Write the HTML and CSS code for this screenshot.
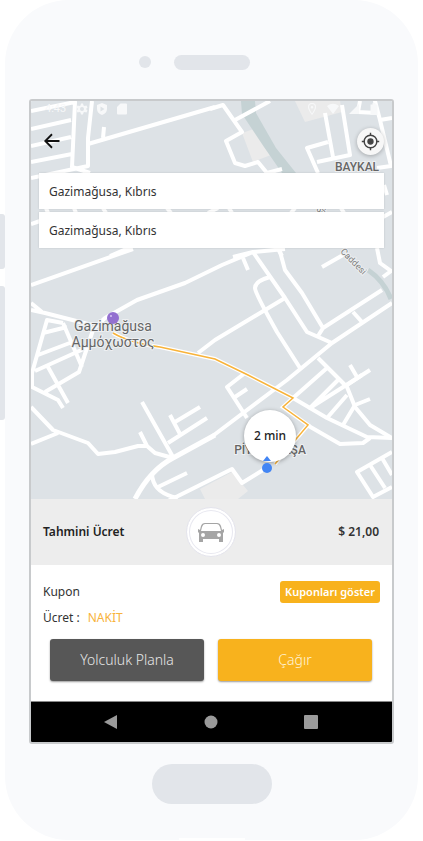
FILE: index.html
```html
<!DOCTYPE html>
<html lang="tr">
<head>
<meta charset="utf-8">
<meta name="viewport" content="width=device-width, initial-scale=1">
<title>Taksi</title>
<link rel="stylesheet" href="styles.css">
</head>
<body>
<div class="phone">
  <div class="side side-short"></div>
  <div class="side side-long"></div>
  <div class="speaker"><span class="lens"></span><span class="slot"></span></div>
  <main class="screen">
    <section class="map-area">
      <svg class="map" viewBox="31 101 361 398" role="img" aria-label="Gazimağusa">
        <rect x="31" y="101" width="361" height="398" fill="#dde2e6"/>
        <g fill="#ebebeb">
          <path d="M295 101l10 21 37-10-2-11zM242 133l15-5 14 27-18 7zM200 489l32-17 16 19-10 8h-33z"/>
        </g>
        <path d="M241 101h14l1 12 20 35 20 25h-14l-18-26-22-33z" fill="#c5d2d4"/>
        <circle cx="250" cy="111" r="1" fill="#fff"/>
        <path d="M368 270Q384 281 391 299" fill="none" stroke="#c5d2d4" stroke-width="5"/>
        <g fill="none" stroke="#fff" stroke-width="4" stroke-linejoin="round">
          <path d="M31 111L75 102L72 167L90 173M31 129L71 120M31 146L71 137M31 162L72 154M31 178L88 166L88 138L92 101M88 144L215 107M104 127L103 138"/>
          <path d="M210 109L223 105L242 132L226 141L235 163L245 166L258 162L267 173L282 169M235 120L270 101M325 113L333 157M342 105L350 155L317 162M328 142L307 148L318 173M360 101L358 112L377 113L375 101L380 120L392 118M380 120L391 166L377 168M384 185L387 195M383 217L392 212"/>
          <path d="M46 208L48 213M74 208L76 213M103 208L106 213M167 208L171 213M208 213L218 208M229 208L232 213M291 213L295 208M341 208L344 213M31 224L40 221"/>
          <path d="M110 256L133 246M278 249L282 256"/>
          <path d="M31 285L133 249M31 303L42 312M31 310L45 313L92 325M92 330L105 318L137 300L185 283L222 265L253 252L285 249M253 252L233 257M63 323L47 320L32 373L32 387L58 400L63 408M43 333L67 327M38 355L75 341M35 371L88 347M63 323L82 367M93 330L79 372L45 392M48 367L68 403M198 353L215 340L285 298"/>
          <path d="M253 252L285 298L307 332L332 343M243 258L248 270M270 277Q255 281 255 288Q255 293 277 332L300 368M279 248L285 270L302 293L323 328L318 336M323 328L382 290M383 277L391 271L380 263L377 248M322 267L343 255M392 303L332 343L287 380L210 438M353 312L362 322M318 358L347 387L355 407L370 425L392 438M327 368L293 398M350 365L357 377M370 370L310 408L338 380"/>
          <path d="M31 407L53 430L88 443L98 454L115 452L138 446H147L155 453L173 458M31 444L58 433M140 432L147 446M142 402L173 457M168 443L207 418M170 415L180 434M175 422L200 407M158 487L187 473M152 473Q152 493 178 498M168 501L232 469L242 483L263 470"/>
          <path d="M245 373L227 387L247 418M235 397L247 389M293 398L327 418L367 437L392 438M307 425L340 444L363 443L370 438M327 418L347 395M343 425L355 405L370 399M347 385L362 375M392 452L357 472L373 497L392 487M370 465L385 488M382 458L392 475"/>
        </g>
        <path d="M215 435L173 458Q150 470 135 499" fill="none" stroke="#fff" stroke-width="5"/>
        <path d="M113 333Q130 343 160 347L215 359L248 375L293 398L283 407L308 425L275 464" fill="none" stroke="#fff" stroke-width="4"/>
        <path d="M113 333Q130 343 160 347L215 359L248 375L293 398L283 407L308 425L275 464" fill="none" stroke="#f8b33a" stroke-width="1.5"/>
        <g class="place">
          <text class="town" x="113" y="331">Gazimağusa</text>
          <text class="town" x="113" y="347">Αμμόχωστος</text>
          <text class="quarter" x="357" y="171">BAYKAL</text>
          <text class="quarter" x="270" y="454">PİYALE PAŞA</text>
          <text class="street" transform="translate(342 250) rotate(45)" x="0" y="3">Caddesi</text>
          <text class="street" transform="translate(316 211) rotate(15)" x="0" y="0">us</text>
        </g>
        <circle cx="113" cy="318" r="6" fill="#9370d0"/>
        <circle cx="111" cy="316" r="1" fill="#d8c8f4"/>
        <circle class="bubble" cx="270" cy="436" r="26" fill="#fff"/>
        <text class="eta" x="270" y="440">2 min</text>
        <path d="M267 456l4 5h-8z" fill="#4285f4"/>
        <circle cx="267" cy="468" r="5" fill="#4285f4"/>
      </svg>
      <div class="overlay">
        <div class="status">
          <span class="clock">4:43</span>
          <svg viewBox="0 0 24 24"><path fill-rule="evenodd" d="M10 1h4l1 4 2 1 4-1 2 4-3 3 3 3-2 4-4-1-2 1-1 4h-4l-1-4-2-1-4 1-2-4 3-3-3-3 2-4 4 1 2-1zM12 8a4 4 0 1 0 0 8 4 4 0 0 0 0-8z"/></svg>
          <svg viewBox="0 0 24 24"><path fill-rule="evenodd" d="M12 0l10 4v8c0 6-4 10-10 12C6 22 2 18 2 12V4zM9 7v10l8-5z"/></svg>
          <svg viewBox="0 0 24 24"><path d="M9 1h11q2 0 2 2v18q0 2-2 2H4q-2 0-2-2V8z"/></svg>
          <svg class="push" viewBox="0 0 24 24"><path fill-rule="evenodd" d="M12 0a8 8 0 0 1 8 8c0 6-8 16-8 16S4 14 4 8a8 8 0 0 1 8-8zm0 2a6 6 0 0 0-6 6c0 3 3 9 6 13 3-4 6-10 6-13a6 6 0 0 0-6-6zm0 4a2 2 0 1 1 0 5 2 2 0 0 1 0-5z"/></svg>
          <svg class="wifi" viewBox="0 0 24 24"><path d="M0 6Q12-3 24 6L12 22z"/></svg>
          <svg viewBox="0 0 24 24"><path d="M22 2v20H2z"/></svg>
          <svg viewBox="0 0 24 24"><path d="M9 0h6v3h4v21H5V3h4z"/></svg>
        </div>
        <div class="toolbar">
          <button class="back" aria-label="Geri"><svg viewBox="0 0 24 24"><path d="M22 12H4M12 3l-9 9 9 9" fill="none" stroke="#111" stroke-width="2.400"/></svg></button>
          <button class="locate" aria-label="Konumum"><svg viewBox="0 0 24 24"><circle cx="12" cy="12" r="4" fill="#444"/><circle cx="12" cy="12" r="8" fill="none" stroke="#444" stroke-width="1.800"/><path d="M12 1v4M12 19v4M1 12h4M19 12h4" stroke="#444" stroke-width="1.800"/></svg></button>
        </div>
        <div class="fields">
          <input type="text" aria-label="Nereden" value="Gazimağusa, Kıbrıs">
          <input type="text" aria-label="Nereye" value="Gazimağusa, Kıbrıs">
        </div>
      </div>
    </section>
    <section class="fare">
      <span class="fare-title">Tahmini Ücret</span>
      <span class="car"><svg viewBox="0 0 28 24"><path fill-rule="evenodd" fill="#a5a5a5" d="M8 3h12q3 0 4 3l1 4 2-1v3l-1 1v9h-4v-3H6v3H2v-9l-1-1V9l2 1 1-4q1-3 4-3zm0 1q-2 0-3 3l-1 4h20l-1-4q-1-3-3-3zM6 13a2 2 0 1 0 0 4 2 2 0 0 0 0-4zm16 0a2 2 0 1 0 0 4 2 2 0 0 0 0-4z"/></svg></span>
      <span class="price">$ 21,00</span>
    </section>
    <section class="panel">
      <div class="row"><span>Kupon</span><button class="coupons">Kuponları göster</button></div>
      <div class="row pay"><span>Ücret :</span><span class="cash">NAKİT</span></div>
      <div class="actions"><button class="plan">Yolculuk Planla</button><button class="call">Çağır</button></div>
    </section>
    <nav class="keys">
      <button aria-label="Geri tuşu"><svg viewBox="0 0 16 16"><path d="M14 1v14L1 8z"/></svg></button>
      <button aria-label="Ana ekran"><svg viewBox="0 0 16 16"><circle cx="8" cy="8" r="6.500"/></svg></button>
      <button aria-label="Son uygulamalar"><svg viewBox="0 0 16 16"><rect x="1" y="1" width="14" height="14" rx="1"/></svg></button>
    </nav>
  </main>
  <div class="home"></div>
</div>
</body>
</html>
```
FILE: styles.css
```css
* { box-sizing: border-box; }
body {
  margin: 0;
  background: #fff;
  color: #333;
  font-family: "Noto Sans", sans-serif;
  font-size: 12px;
  line-height: 16px;
}
button, input { font: inherit; border: 0; padding: 0; margin: 0; }
svg { display: block; }
.phone {
  position: relative;
  margin: 0 5px 2px;
  padding: 0 24px 36px;
  background: #f9fafc;
  border-radius: 64px;
}
.phone::after {
  content: "";
  position: absolute;
  bottom: 0;
  left: 50%;
  width: 66px;
  height: 2px;
  margin-left: -33px;
  background: #fff;
}
.side {
  position: absolute;
  left: -5px;
  width: 5px;
  background: #e2e5ea;
  border-radius: 0 3px 3px 0;
}
.side-short { top: 214px; height: 55px; }
.side-long { top: 286px; height: 134px; }
.speaker {
  display: flex;
  align-items: center;
  gap: 23px;
  height: 99px;
  padding: 25px 0 0 110px;
}
.lens { width: 12px; height: 12px; border-radius: 50%; background: #e2e5ea; }
.slot { width: 76px; height: 15px; border-radius: 8px; background: #e2e5ea; }
.screen {
  border: 2px solid #c8cacc;
  border-radius: 3px;
  background: #fff;
  overflow: hidden;
}
.map-area { display: grid; }
.map, .overlay { grid-area: 1 / 1; width: 100%; }
.place { fill: #666; stroke: #eef0f2; stroke-width: 2px; paint-order: stroke; font-family: Roboto, sans-serif; }
.town { font-size: 14px; text-anchor: middle; }
.quarter { font-size: 12px; font-weight: 500; text-anchor: middle; }
.street { font-size: 9px; fill: #808080; }
.bubble { filter: drop-shadow(0 1px 2px #0005); }
.eta { font-size: 12px; font-weight: 500; fill: #222; text-anchor: middle; }
.status {
  display: flex;
  align-items: center;
  gap: 8px;
  height: 16px;
  padding: 0 12px 0 14px;
  color: #f7f8f9;
  font: 11px/16px Roboto, sans-serif;
}
.status svg { width: 12px; height: 12px; fill: #f7f8f9; }
.clock { margin-right: 2px; }
.status .push { margin-left: auto; }
.status .wifi { width: 14px; }
.toolbar {
  display: flex;
  align-items: center;
  justify-content: space-between;
  height: 48px;
  padding: 0 8px 0 12px;
}
.back { background: none; }
.back svg { width: 18px; height: 18px; }
.locate {
  display: grid;
  place-items: center;
  width: 27px;
  height: 27px;
  border-radius: 50%;
  background: #f7f7f7;
  box-shadow: 0 1px 4px #0004;
}
.locate svg { width: 19px; height: 19px; }
.fields { display: grid; gap: 3px; padding: 8px 8px 0; }
.fields input {
  width: 100%;
  height: 36px;
  padding: 0 10px;
  background: #fff;
  color: #333;
  box-shadow: 0 0 2px #0002;
}
.fare {
  display: grid;
  grid-template-columns: 1fr auto 1fr;
  align-items: center;
  padding: 8px 13px 8px 12px;
  background: #ededed;
}
.fare-title { font-weight: 600; color: #222; }
.price { text-align: right; font-weight: 600; }
.car {
  display: grid;
  place-items: center;
  width: 50px;
  height: 50px;
  border-radius: 50%;
  background: #fff;
  border: 1px solid #e4e4ec;
  box-shadow: inset 0 0 0 2px #fff, inset 0 0 0 3px #e8e8f0;
}
.car svg { width: 28px; height: 24px; }
.panel { padding: 16px 12px 20px; }
.row { display: flex; align-items: center; justify-content: space-between; height: 22px; }
.pay { justify-content: flex-start; gap: 8px; margin-top: 4px; }
.cash { color: #f8b33a; }
.coupons {
  height: 22px;
  padding: 0 5px;
  border-radius: 3px;
  background: #f8b21d;
  color: #fff;
  font-size: 11px;
  font-weight: 600;
}
.actions { display: flex; gap: 14px; padding: 10px 8px 0 7px; }
.actions button {
  flex: 1;
  height: 42px;
  border-radius: 3px;
  color: #e6e6e6;
  font-size: 14px;
  font-weight: 300;
  box-shadow: 0 1px 2px #0006;
}
.actions .plan { background: #575757; }
.actions .call { background: #f8b21d; color: #fff3d6; }
.keys {
  display: flex;
  justify-content: center;
  gap: 84px;
  padding: 12px 2px 12px 0;
  background: #000;
  border-top: 1px solid #888;
}
.keys button { background: none; }
.keys svg { width: 16px; height: 16px; fill: #9a9a9a; }
.home {
  width: 120px;
  height: 40px;
  margin: 20px auto 0;
  border-radius: 20px;
  background: #e2e5ea;
}
```
